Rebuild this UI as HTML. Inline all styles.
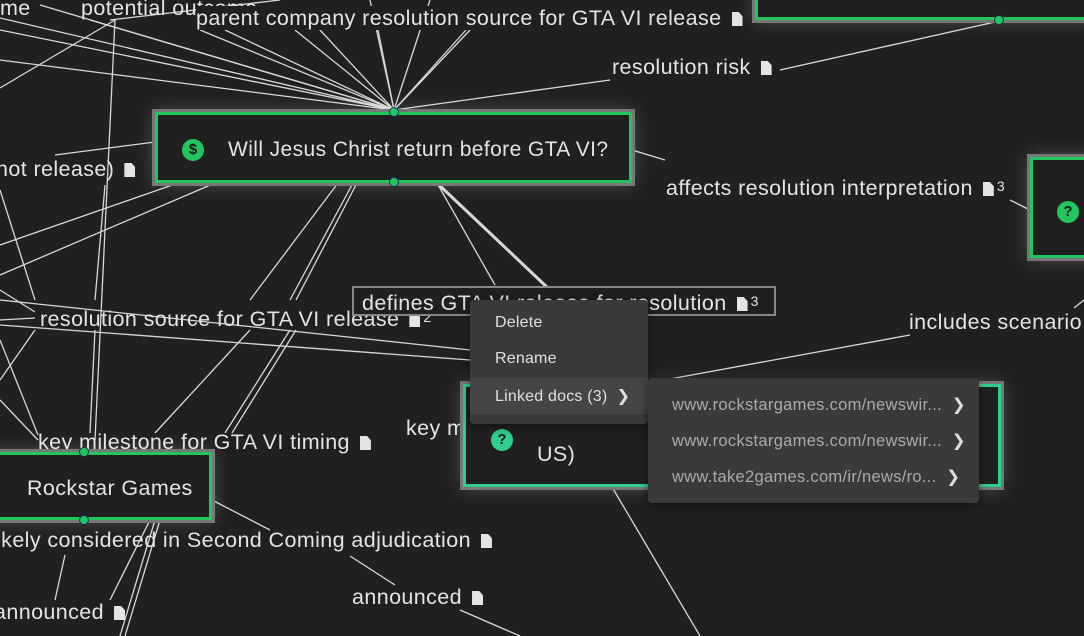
<!DOCTYPE html>
<html><head><meta charset="utf-8"><style>
*{margin:0;padding:0;box-sizing:border-box}
body{width:1084px;height:636px;background:#202020;overflow:hidden;position:relative;font-family:"Liberation Sans","DejaVu Sans",sans-serif;color:#e2e2e2}
svg.l{position:absolute;left:0;top:0}
.t{position:absolute;font-size:21.5px;letter-spacing:.4px;line-height:24px;white-space:nowrap;color:#e4e4e4}
.doc{display:inline-block;width:11px;height:14px;background:#e4e4e4;margin-left:10px;vertical-align:-1px;clip-path:polygon(0 0,65% 0,100% 30%,100% 100%,0 100%)}
.n{font-size:14px;margin-left:3px;vertical-align:4px}
.node{position:absolute;background:#202020;border:3px solid #22c55e;outline:3px solid #777;box-shadow:0 0 18px rgba(255,255,255,.25)}
.ic{position:absolute;width:22px;height:22px;border-radius:50%;background:#22c55e;color:#1a1a1a;font-size:15px;font-weight:bold;text-align:center;line-height:22px;letter-spacing:0}
.dot{position:absolute;width:10px;height:10px;border-radius:50%;background:#22c55e;border:1px solid #135}
.menu{position:absolute;background:#3a3a3a;border-radius:4px;box-shadow:0 2px 10px rgba(0,0,0,.5)}
.mi{position:absolute;left:25px;font-size:16px;letter-spacing:.2px;color:#e0e0e0;white-space:nowrap}
.si{position:absolute;left:24px;font-size:16.5px;letter-spacing:.3px;color:#aaa;white-space:nowrap}
</style></head><body>
<svg class="l" width="1084" height="636" stroke="#d8d8d8" stroke-width="1.3" fill="none">
<g>
<line x1="394" y1="110" x2="0" y2="18"/><line x1="394" y1="110" x2="0" y2="30"/><line x1="394" y1="110" x2="0" y2="60"/>
<line x1="394" y1="110" x2="40" y2="5"/><line x1="394" y1="110" x2="90" y2="20"/><line x1="394" y1="110" x2="200" y2="30"/>
<line x1="394" y1="110" x2="225" y2="30"/><line x1="394" y1="110" x2="295" y2="30"/><line x1="394" y1="110" x2="320" y2="30"/>
<line x1="394" y1="110" x2="378" y2="30"/><line x1="394" y1="110" x2="466" y2="30"/><line x1="394" y1="110" x2="470" y2="30"/>
<line x1="394" y1="110" x2="610" y2="80"/><line x1="394" y1="110" x2="430" y2="0"/><line x1="394" y1="110" x2="370" y2="0"/>
<line x1="115" y1="20" x2="0" y2="88"/><line x1="115" y1="20" x2="95" y2="440"/><line x1="110" y1="20" x2="280" y2="0"/>
<line x1="155" y1="142" x2="55" y2="155"/>
<line x1="178" y1="183" x2="0" y2="245"/><line x1="215" y1="183" x2="0" y2="275"/>
<line x1="0" y1="190" x2="35" y2="300"/><line x1="105" y1="185" x2="95" y2="300"/>
<line x1="338" y1="183" x2="250" y2="300"/><line x1="353" y1="183" x2="290" y2="300"/><line x1="357" y1="183" x2="296" y2="300"/>
<line x1="437" y1="183" x2="495" y2="285"/><line x1="632" y1="150" x2="665" y2="160"/>
<line x1="1010" y1="200" x2="1030" y2="210"/>
<line x1="780" y1="70" x2="995" y2="22"/>
<line x1="0" y1="290" x2="35" y2="312"/><line x1="0" y1="320" x2="35" y2="318"/>
<line x1="0" y1="300" x2="470" y2="350"/><line x1="0" y1="325" x2="470" y2="360"/>
<line x1="250" y1="330" x2="155" y2="433"/><line x1="290" y1="330" x2="225" y2="433"/><line x1="296" y1="330" x2="232" y2="433"/>
<line x1="35" y1="330" x2="0" y2="380"/><line x1="95" y1="330" x2="90" y2="433"/>
<line x1="0" y1="340" x2="38" y2="435"/><line x1="0" y1="400" x2="38" y2="440"/>
<line x1="648" y1="383" x2="910" y2="335"/>
<line x1="212" y1="500" x2="270" y2="530"/><line x1="350" y1="556" x2="395" y2="585"/>
<line x1="150" y1="520" x2="110" y2="600"/><line x1="155" y1="520" x2="120" y2="636"/><line x1="160" y1="520" x2="125" y2="636"/>
<line x1="65" y1="555" x2="55" y2="600"/><line x1="612" y1="487" x2="700" y2="636"/>
<line x1="460" y1="610" x2="520" y2="636"/><line x1="1084" y1="300" x2="1074" y2="308"/>
</g>
<line x1="437" y1="183" x2="550" y2="290" stroke-width="3"/>
</svg>

<div class="node" style="left:755px;top:-10px;width:340px;height:30px"></div>
<div class="dot" style="left:994px;top:15px"></div>
<div class="node" style="left:1030px;top:157px;width:70px;height:101px"><div class="ic" style="left:24px;top:41px">?</div></div>

<div class="node" style="left:155px;top:112px;width:477px;height:71px">
<div class="ic" style="left:24px;top:24px">$</div>
<div class="t" style="left:70px;top:23px;font-size:21px">Will Jesus Christ return before GTA VI?</div>
</div>
<div class="dot" style="left:389px;top:107px"></div><div class="dot" style="left:389px;top:177px"></div>

<div class="t" style="left:0;top:-4px">me</div>
<div class="t" style="left:81px;top:-4px">potential outcome</div>
<div class="t" style="left:196px;top:6px;background:#202020">parent company resolution source for GTA VI release<span class="doc"></span></div>
<div class="t" style="left:612px;top:55px">resolution risk<span class="doc"></span></div>
<div class="t" style="left:-4px;top:157px">not release)<span class="doc"></span></div>
<div class="t" style="left:666px;top:174px">affects resolution interpretation<span class="doc"></span><span class="n">3</span></div>
<div class="t" style="left:40px;top:305px">resolution source for GTA VI release<span class="doc"></span><span class="n">2</span></div>
<div class="t" style="left:909px;top:310px">includes scenario</div>
<div class="t" style="left:38px;top:430px">key milestone for GTA VI timing<span class="doc"></span></div>
<div class="t" style="left:406px;top:416px">key m</div>
<div class="t" style="left:-4px;top:528px">ikely considered in Second Coming adjudication<span class="doc"></span></div>
<div class="t" style="left:352px;top:585px">announced<span class="doc"></span></div>
<div class="t" style="left:-6px;top:600px">announced<span class="doc"></span></div>

<div class="t" style="left:352px;top:286px;height:30px;width:424px;border:2px solid #888;background:#202020;padding-left:8px;line-height:26px">defines GTA VI release for resolution<span class="doc"></span><span class="n">3</span></div>

<div class="node" style="left:-10px;top:452px;width:222px;height:68px"><div class="t" style="left:34px;top:21px">Rockstar Games</div></div>
<div class="dot" style="left:79px;top:447px"></div><div class="dot" style="left:79px;top:515px"></div>

<div class="node" style="left:463px;top:384px;width:538px;height:103px;border-color:#2fd08e">
<div class="ic" style="left:25px;top:42px;background:#2fd08e">?</div>
<div class="t" style="left:71px;top:55px">US)</div>
</div>

<div class="menu" style="left:470px;top:300px;width:178px;height:124px">
<div style="position:absolute;left:0;top:78px;width:178px;height:36px;background:#454545"></div>
<div class="mi" style="top:14px">Delete</div>
<div class="mi" style="top:50px">Rename</div>
<div class="mi" style="top:86px">Linked docs (3) &nbsp;❯</div>
</div>
<div class="menu" style="left:648px;top:378px;width:331px;height:125px">
<div class="si" style="top:17px">www.rockstargames.com/newswir... &nbsp;<span style="color:#ddd">❯</span></div>
<div class="si" style="top:53px">www.rockstargames.com/newswir... &nbsp;<span style="color:#ddd">❯</span></div>
<div class="si" style="top:89px">www.take2games.com/ir/news/ro... &nbsp;<span style="color:#ddd">❯</span></div>
</div>
</body></html>
